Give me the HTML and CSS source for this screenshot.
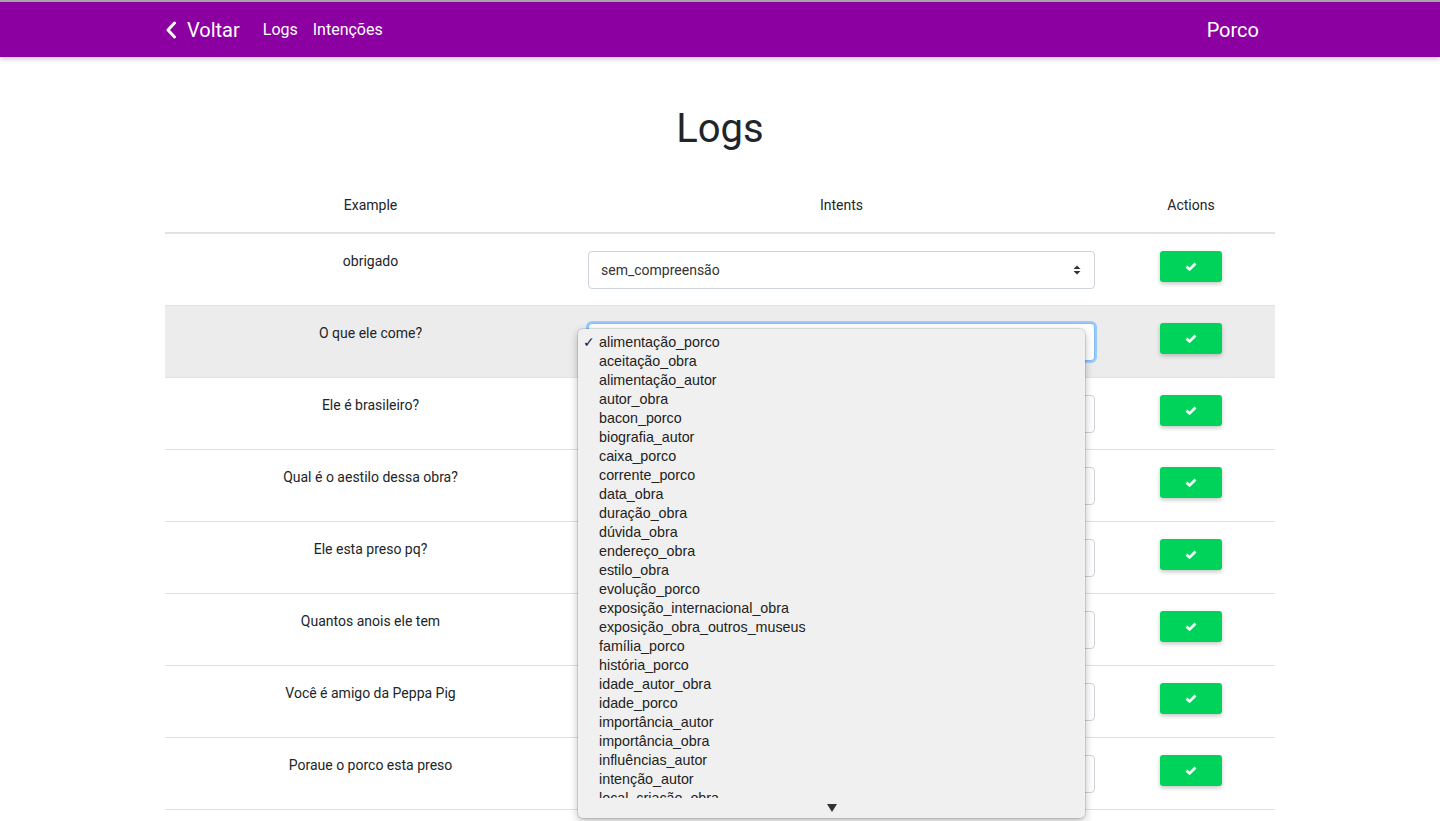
FILE: index.html
```html
<!DOCTYPE html>
<html lang="pt">
<head>
<meta charset="utf-8">
<title>Logs</title>
<link rel="stylesheet" href="styles.css">
</head>
<body>
<div class="topline"></div>
<nav class="navbar">
  <div class="container nav-inner">
    <div class="nav-left">
      <a class="back" href="#">
        <svg class="chev" width="12" height="18" viewBox="0 0 12 18"><path d="M9.5 2 L3 9 L9.5 16" fill="none" stroke="#fff" stroke-width="3" stroke-linecap="round" stroke-linejoin="round"/></svg>
        <span>Voltar</span>
      </a>
      <a class="nav-link" href="#">Logs</a>
      <a class="nav-link" href="#">Intenções</a>
    </div>
    <div class="brand">Porco</div>
  </div>
</nav>

<main class="container">
  <h1 class="title">Logs</h1>
  <table class="table">
    <thead>
      <tr><th class="c-ex">Example</th><th class="c-in">Intents</th><th class="c-ac">Actions</th></tr>
    </thead>
    <tbody>
      <tr>
        <td class="c-ex">obrigado</td>
        <td class="c-in"><div class="select"><span>sem_compreensão</span><svg class="arr" width="8" height="10" viewBox="0 0 8 10"><path d="M4 0.5 L7.5 4 L0.5 4 Z M4 9.5 L7.5 6 L0.5 6 Z" fill="#333"/></svg></div></td>
        <td class="c-ac"><button class="btn-ok"><svg width="12" height="9" viewBox="0 0 12 9"><path d="M1.5 4.5 L4.5 7.5 L10.5 1.5" fill="none" stroke="#fff" stroke-width="2.6"/></svg></button></td>
      </tr>
      <tr class="hover">
        <td class="c-ex">O que ele come?</td>
        <td class="c-in">
          <div class="select-wrap">
            <div class="select focus"><span>alimentação_porco</span></div>
            <div class="dropdown">
              <ul class="options">
                <li class="sel">alimentação_porco</li>
                <li>aceitação_obra</li>
                <li>alimentação_autor</li>
                <li>autor_obra</li>
                <li>bacon_porco</li>
                <li>biografia_autor</li>
                <li>caixa_porco</li>
                <li>corrente_porco</li>
                <li>data_obra</li>
                <li>duração_obra</li>
                <li>dúvida_obra</li>
                <li>endereço_obra</li>
                <li>estilo_obra</li>
                <li>evolução_porco</li>
                <li>exposição_internacional_obra</li>
                <li>exposição_obra_outros_museus</li>
                <li>família_porco</li>
                <li>história_porco</li>
                <li>idade_autor_obra</li>
                <li>idade_porco</li>
                <li>importância_autor</li>
                <li>importância_obra</li>
                <li>influências_autor</li>
                <li>intenção_autor</li>
                <li>local_criação_obra</li>
                <li>local_obra</li>
              </ul>
              <div class="scroll-down"><svg width="10" height="8" viewBox="0 0 10 8"><path d="M0 0 L10 0 L5 8 Z" fill="#333"/></svg></div>
            </div>
          </div>
        </td>
        <td class="c-ac"><button class="btn-ok"><svg width="12" height="9" viewBox="0 0 12 9"><path d="M1.5 4.5 L4.5 7.5 L10.5 1.5" fill="none" stroke="#fff" stroke-width="2.6"/></svg></button></td>
      </tr>
      <tr>
        <td class="c-ex">Ele é brasileiro?</td>
        <td class="c-in"><div class="select"><span>autor_obra</span><svg class="arr" width="8" height="10" viewBox="0 0 8 10"><path d="M4 0.5 L7.5 4 L0.5 4 Z M4 9.5 L7.5 6 L0.5 6 Z" fill="#333"/></svg></div></td>
        <td class="c-ac"><button class="btn-ok"><svg width="12" height="9" viewBox="0 0 12 9"><path d="M1.5 4.5 L4.5 7.5 L10.5 1.5" fill="none" stroke="#fff" stroke-width="2.6"/></svg></button></td>
      </tr>
      <tr>
        <td class="c-ex">Qual é o aestilo dessa obra?</td>
        <td class="c-in"><div class="select"><span>estilo_obra</span><svg class="arr" width="8" height="10" viewBox="0 0 8 10"><path d="M4 0.5 L7.5 4 L0.5 4 Z M4 9.5 L7.5 6 L0.5 6 Z" fill="#333"/></svg></div></td>
        <td class="c-ac"><button class="btn-ok"><svg width="12" height="9" viewBox="0 0 12 9"><path d="M1.5 4.5 L4.5 7.5 L10.5 1.5" fill="none" stroke="#fff" stroke-width="2.6"/></svg></button></td>
      </tr>
      <tr>
        <td class="c-ex">Ele esta preso pq?</td>
        <td class="c-in"><div class="select"><span>corrente_porco</span><svg class="arr" width="8" height="10" viewBox="0 0 8 10"><path d="M4 0.5 L7.5 4 L0.5 4 Z M4 9.5 L7.5 6 L0.5 6 Z" fill="#333"/></svg></div></td>
        <td class="c-ac"><button class="btn-ok"><svg width="12" height="9" viewBox="0 0 12 9"><path d="M1.5 4.5 L4.5 7.5 L10.5 1.5" fill="none" stroke="#fff" stroke-width="2.6"/></svg></button></td>
      </tr>
      <tr>
        <td class="c-ex">Quantos anois ele tem</td>
        <td class="c-in"><div class="select"><span>idade_porco</span><svg class="arr" width="8" height="10" viewBox="0 0 8 10"><path d="M4 0.5 L7.5 4 L0.5 4 Z M4 9.5 L7.5 6 L0.5 6 Z" fill="#333"/></svg></div></td>
        <td class="c-ac"><button class="btn-ok"><svg width="12" height="9" viewBox="0 0 12 9"><path d="M1.5 4.5 L4.5 7.5 L10.5 1.5" fill="none" stroke="#fff" stroke-width="2.6"/></svg></button></td>
      </tr>
      <tr>
        <td class="c-ex">Você é amigo da Peppa Pig</td>
        <td class="c-in"><div class="select"><span>sem_compreensão</span><svg class="arr" width="8" height="10" viewBox="0 0 8 10"><path d="M4 0.5 L7.5 4 L0.5 4 Z M4 9.5 L7.5 6 L0.5 6 Z" fill="#333"/></svg></div></td>
        <td class="c-ac"><button class="btn-ok"><svg width="12" height="9" viewBox="0 0 12 9"><path d="M1.5 4.5 L4.5 7.5 L10.5 1.5" fill="none" stroke="#fff" stroke-width="2.6"/></svg></button></td>
      </tr>
      <tr>
        <td class="c-ex">Poraue o porco esta preso</td>
        <td class="c-in"><div class="select"><span>corrente_porco</span><svg class="arr" width="8" height="10" viewBox="0 0 8 10"><path d="M4 0.5 L7.5 4 L0.5 4 Z M4 9.5 L7.5 6 L0.5 6 Z" fill="#333"/></svg></div></td>
        <td class="c-ac"><button class="btn-ok"><svg width="12" height="9" viewBox="0 0 12 9"><path d="M1.5 4.5 L4.5 7.5 L10.5 1.5" fill="none" stroke="#fff" stroke-width="2.6"/></svg></button></td>
      </tr>
      <tr>
        <td class="c-ex">Qual é o nome dele?</td>
        <td class="c-in"><div class="select"><span>sem_compreensão</span><svg class="arr" width="8" height="10" viewBox="0 0 8 10"><path d="M4 0.5 L7.5 4 L0.5 4 Z M4 9.5 L7.5 6 L0.5 6 Z" fill="#333"/></svg></div></td>
        <td class="c-ac"><button class="btn-ok"><svg width="12" height="9" viewBox="0 0 12 9"><path d="M1.5 4.5 L4.5 7.5 L10.5 1.5" fill="none" stroke="#fff" stroke-width="2.6"/></svg></button></td>
      </tr>
    </tbody>
  </table>
</main>
</body>
</html>
```
FILE: styles.css
```css
* { box-sizing: border-box; }
html, body { margin: 0; padding: 0; }
body {
  font-family: Roboto, "Liberation Sans", Arial, sans-serif;
  font-size: 14px;
  color: #212529;
  background: #fff;
  overflow: hidden;
  height: 821px;
}
.topline { height: 2px; background: #a8a8a8; }
.container { width: 1110px; margin: 0 auto; }

.navbar {
  height: 55px;
  background: #8c00a1;
  box-shadow: 0 2px 5px rgba(0, 0, 0, 0.22);
  position: relative;
  z-index: 2;
}
.nav-inner {
  height: 100%;
  display: flex;
  align-items: center;
  justify-content: space-between;
}
.nav-left { display: flex; align-items: center; }
.nav-left a { color: #fff; text-decoration: none; }
.back { display: flex; align-items: center; font-size: 20px; margin-right: 23px; }
.chev { margin-right: 10px; margin-top: 1px; }
.nav-link { font-size: 16px; margin-right: 15px; }
.brand { color: #fff; font-size: 20px; margin-right: 16px; }

.title {
  font-size: 40px;
  font-weight: 400;
  line-height: 48px;
  text-align: center;
  margin: 48px 0 28px;
}

.table { width: 100%; border-collapse: collapse; }
.table th, .table td {
  line-height: 24px;
  vertical-align: top;
  text-align: center;
  font-weight: 400;
}
.table th { padding: 12px 12px 15px; }
.table td { padding: 15px 12px 12px; }
.table thead th { border-bottom: 2px solid #dee2e6; }
.table tbody td { border-top: 1px solid #dee2e6; }
.table tbody tr:first-child td { border-top: none; }
.c-ex { width: 411px; }
.c-in { width: 531px; }
.c-ac { width: 168px; }
tr.hover td { background: #ececec; }

.select {
  margin: 2px 0 4px;
  height: 38px;
  border: 1px solid #ced4da;
  border-radius: 4px;
  background: #fff;
  display: flex;
  align-items: center;
  justify-content: space-between;
  padding: 0 13px 0 12px;
  text-align: left;
  font-size: 14px;
  color: #333;
}
.select.focus {
  border-color: #80bdff;
  box-shadow: 0 0 0 2px #9cc8fa;
}
.select-wrap { position: relative; }
.dropdown {
  position: absolute;
  left: -10px;
  top: 6px;
  width: 507px;
  height: 489px;
  background: #f0f0f0;
  border-radius: 5px;
  box-shadow: 0 0 0 1px rgba(0,0,0,0.1), 0 3px 8px rgba(0,0,0,0.28);
  z-index: 5;
  display: flex;
  flex-direction: column;
  font-family: "Liberation Sans", Arial, sans-serif;
  font-size: 14.3px;
  color: #222;
  text-align: left;
}
.options {
  list-style: none;
  margin: 0;
  padding: 4px 0 0;
  height: 469px;
  overflow: hidden;
}
.options li {
  height: 19px;
  line-height: 19px;
  padding-left: 21px;
  position: relative;
}
.options li.sel::before {
  content: "✓";
  position: absolute;
  left: 5px;
  top: 0;
  font-size: 14px;
}
.scroll-down {
  flex: 1;
  display: flex;
  justify-content: center;
  align-items: center;
}

.btn-ok {
  margin-top: 2px;
  width: 62px;
  height: 31px;
  border: none;
  border-radius: 3px;
  background: #00d35a;
  box-shadow: 0 2px 4px rgba(0, 0, 0, 0.22);
  display: inline-flex;
  align-items: center;
  justify-content: center;
  padding: 0;
}
```
